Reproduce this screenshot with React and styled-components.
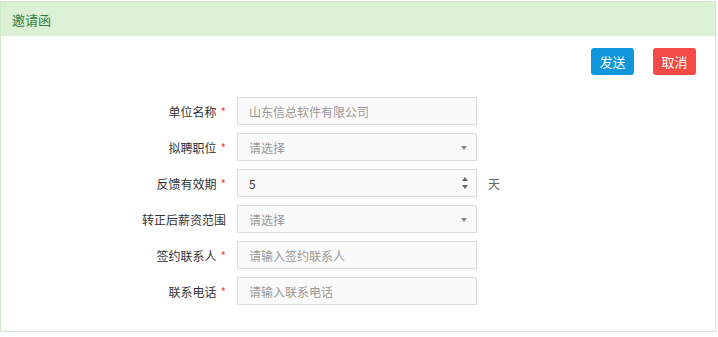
import { Fragment } from 'react'
import styled, { createGlobalStyle } from 'styled-components'

const GlobalStyle = createGlobalStyle`
  html, body {
    margin: 0;
    padding: 0;
    background: #fff;
  }
  body {
    font-family: "Noto Sans CJK SC", "Liberation Sans", sans-serif;
    font-size: 12px;
    color: #333;
  }
`

const Panel = styled.section`
  box-sizing: border-box;
  margin-top: 1px;
  width: 716px;
  height: 331px;
  border: 1px solid #d0e9c6;
`

const PanelHeading = styled.header`
  box-sizing: border-box;
  height: 34px;
  padding: 0 11px;
  display: flex;
  align-items: center;
  background: #dbf0d5;
  color: #2f7d45;
  font-size: 13px;
`

const PanelBody = styled.div`
  padding: 12px 19px 0 0;
`

const Actions = styled.div`
  display: flex;
  justify-content: flex-end;
  gap: 19px;
`

const ActionButton = styled.button`
  box-sizing: border-box;
  width: 43px;
  height: 27px;
  border: none;
  border-radius: 3px;
  padding: 0;
  font-family: inherit;
  font-size: 13px;
  color: #fff;
  background: ${(p) => (p.$variant === 'danger' ? '#f64a47' : '#1296db')};
  cursor: pointer;
`

const Form = styled.div`
  margin-top: 22px;
  display: grid;
  grid-template-columns: 225px 240px auto;
  column-gap: 11px;
  row-gap: 8px;
  align-items: center;
`

const Label = styled.label`
  text-align: right;
  font-size: 12px;
  color: #333;
  white-space: nowrap;
`

const Star = styled.span`
  color: #f04848;
  margin-left: 4px;
`

const Field = styled.div`
  position: relative;
  box-sizing: border-box;
  height: 28px;
  border: 1px solid #dcdcdc;
  background: #fafafa;
  display: flex;
  align-items: center;
  padding: 0 11px;
  font-size: 12px;
  color: ${(p) => (p.$filled ? '#333' : '#999')};
`

const Caret = styled.span`
  position: absolute;
  right: 9px;
  top: 12px;
  width: 0;
  height: 0;
  border-left: 3px solid transparent;
  border-right: 3px solid transparent;
  border-top: 4px solid #888;
`

const Spinner = styled.span`
  position: absolute;
  right: 8px;
  top: 7px;
  display: flex;
  flex-direction: column;
  gap: 4px;
`

const Arrow = styled.span`
  width: 0;
  height: 0;
  border-left: 3.5px solid transparent;
  border-right: 3.5px solid transparent;
  ${(p) => (p.$up ? 'border-bottom: 4px solid #666;' : 'border-top: 4px solid #666;')}
`

const Unit = styled.span`
  font-size: 12px;
  color: #666;
`

const rows = [
  { label: '单位名称', required: true, text: '山东信总软件有限公司' },
  { label: '拟聘职位', required: true, text: '请选择', select: true },
  { label: '反馈有效期', required: true, text: '5', filled: true, number: true, unit: '天' },
  { label: '转正后薪资范围', required: false, text: '请选择', select: true },
  { label: '签约联系人', required: true, text: '请输入签约联系人' },
  { label: '联系电话', required: true, text: '请输入联系电话' },
]

export default function App() {
  return (
    <>
      <GlobalStyle />
      <Panel>
        <PanelHeading>邀请函</PanelHeading>
        <PanelBody>
          <Actions>
            <ActionButton type="button">发送</ActionButton>
            <ActionButton type="button" $variant="danger">取消</ActionButton>
          </Actions>
          <Form>
            {rows.map((row) => (
              <Fragment key={row.label}>
                <Label>
                  {row.label}
                  {row.required && <Star>*</Star>}
                </Label>
                <Field $filled={row.filled}>
                  {row.text}
                  {row.select && <Caret />}
                  {row.number && (
                    <Spinner>
                      <Arrow $up />
                      <Arrow />
                    </Spinner>
                  )}
                </Field>
                <Unit>{row.unit || ''}</Unit>
              </Fragment>
            ))}
          </Form>
        </PanelBody>
      </Panel>
    </>
  )
}
